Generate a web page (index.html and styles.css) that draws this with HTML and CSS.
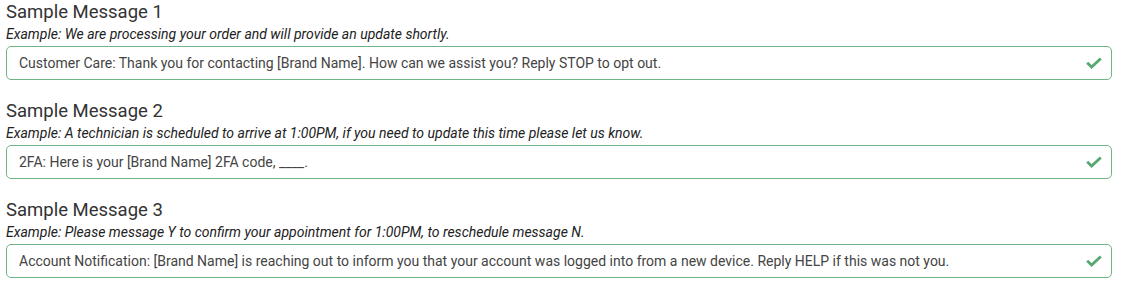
FILE: index.html
```html
<!DOCTYPE html>
<html>
<head>
<meta charset="utf-8">
<link rel="stylesheet" href="styles.css">
</head>
<body>
<div class="page">
  <div class="field">
    <div class="title">Sample Message 1</div>
    <div class="example">Example: We are processing your order and will provide an update shortly.</div>
    <div class="box">
      <span class="value">Customer Care: Thank you for contacting [Brand Name]. How can we assist you? Reply STOP to opt out.</span>
      <svg class="check" viewBox="0 0 16 12" width="16" height="12"><path d="M1.2 5.8 L5.6 10 L14.8 1.4" fill="none" stroke="#55a870" stroke-width="2.8"/></svg>
    </div>
  </div>
  <div class="field">
    <div class="title">Sample Message 2</div>
    <div class="example">Example: A technician is scheduled to arrive at 1:00PM, if you need to update this time please let us know.</div>
    <div class="box">
      <span class="value">2FA: Here is your [Brand Name] 2FA code, ____.</span>
      <svg class="check" viewBox="0 0 16 12" width="16" height="12"><path d="M1.2 5.8 L5.6 10 L14.8 1.4" fill="none" stroke="#55a870" stroke-width="2.8"/></svg>
    </div>
  </div>
  <div class="field">
    <div class="title">Sample Message 3</div>
    <div class="example">Example: Please message Y to confirm your appointment for 1:00PM, to reschedule message N.</div>
    <div class="box">
      <span class="value">Account Notification: [Brand Name] is reaching out to inform you that your account was logged into from a new device. Reply HELP if this was not you.</span>
      <svg class="check" viewBox="0 0 16 12" width="16" height="12"><path d="M1.2 5.8 L5.6 10 L14.8 1.4" fill="none" stroke="#55a870" stroke-width="2.8"/></svg>
    </div>
  </div>
</div>
</body>
</html>
```
FILE: styles.css
```css
html, body {
  margin: 0;
  padding: 0;
  background: #ffffff;
}
.page {
  font-family: Roboto, "Liberation Sans", sans-serif;
  padding: 0 9px 0 6px;
  display: flex;
  flex-direction: column;
  gap: 19px;
}
.field {
  display: flex;
  flex-direction: column;
}
.title {
  font-size: 18.5px;
  line-height: 24px;
  color: #333333;
}
.example {
  font-size: 14px;
  font-style: italic;
  line-height: 20px;
  color: #222222;
  margin-bottom: 2px;
}
.box {
  height: 34px;
  box-sizing: border-box;
  border: 1px solid #6fb487;
  border-radius: 5px;
  display: flex;
  align-items: center;
  justify-content: space-between;
  padding: 0 9px 0 12px;
}
.value {
  font-size: 14px;
  color: #444444;
}
.check {
  flex: none;
}
```
